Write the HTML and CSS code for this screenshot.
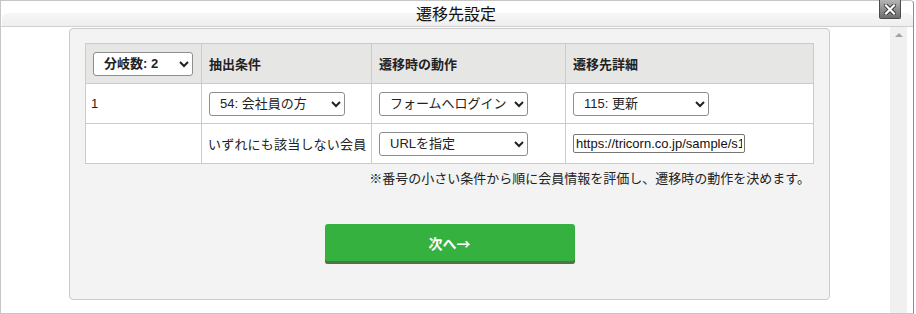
FILE: index.html
```html
<!DOCTYPE html>
<html lang="ja">
<head>
  <meta charset="UTF-8" />
  <title>遷移先設定</title>
  <link rel="stylesheet" href="styles.css">
</head>
<body>
  <div class="dialog">
    <div class="titlebar">
      <span class="title">遷移先設定</span>
      <button class="close-btn" type="button" aria-label="閉じる">
        <svg width="12" height="11" viewBox="0 0 12 11">
          <path d="M2 1.5 L10 9.5 M10 1.5 L2 9.5" stroke="#333" stroke-width="4" stroke-linecap="square" />
          <path d="M2 1.5 L10 9.5 M10 1.5 L2 9.5" stroke="#fff" stroke-width="2.2" stroke-linecap="square" />
        </svg>
      </button>
    </div>
    <div class="body-row">
      <div class="content">
        <div class="panel">
          <table class="rules">
            <tr class="head">
              <th class="col-num">
                <select class="sel sel-count">
                  <option>分岐数: 2</option>
                </select>
              </th>
              <th class="col-cond">抽出条件</th>
              <th class="col-action">遷移時の動作</th>
              <th class="col-detail">遷移先詳細</th>
            </tr>
            <tr>
              <td>1</td>
              <td>
                <select class="sel sel-cond">
                  <option>54: 会社員の方</option>
                </select>
              </td>
              <td>
                <select class="sel sel-action">
                  <option>フォームへログイン</option>
                </select>
              </td>
              <td>
                <select class="sel sel-detail">
                  <option>115: 更新</option>
                </select>
              </td>
            </tr>
            <tr>
              <td></td>
              <td class="nowrap">いずれにも該当しない会員</td>
              <td>
                <select class="sel sel-action">
                  <option>URLを指定</option>
                </select>
              </td>
              <td>
                <input class="url-input" type="text" value="https://tricorn.co.jp/sample/s1/index.html">
              </td>
            </tr>
          </table>
          <p class="note">※番号の小さい条件から順に会員情報を評価し、遷移時の動作を決めます。</p>
          <div class="actions">
            <button class="next-btn" type="button">次へ→</button>
          </div>
        </div>
      </div>
      <div class="scrollbar">
        <span class="arrow-up"></span>
      </div>
    </div>
  </div>
</body>
</html>
```

FILE: styles.css
```css
html, body {
  margin: 0;
  padding: 0;
  background: #fff;
}
body {
  width: 916px;
  height: 314px;
  overflow: hidden;
  font-family: "Liberation Sans", Arial, "Noto Sans CJK JP", sans-serif;
  font-size: 13px;
  color: #222;
}
.dialog {
  width: 912px;
  height: 312px;
  border: 1px solid #c6c6c6;
  border-right: 1px solid #8c8c8c;
  border-top-right-radius: 4px;
  display: flex;
  flex-direction: column;
  background: #fff;
}
.titlebar {
  position: relative;
  height: 25px;
  border-bottom: 1px solid #cfcfcf;
  display: flex;
  justify-content: center;
  align-items: flex-end;
}
.titlebar::before {
  content: "";
  position: absolute;
  left: 1px;
  right: 0;
  top: 12px;
  bottom: 0;
  background: linear-gradient(#f6f6f6, #efefef);
  border-radius: 6px 6px 0 0;
}
.title {
  position: relative;
  font-size: 16px;
  line-height: 22px;
  color: #111;
  padding-right: 2px;
}
.close-btn {
  position: absolute;
  top: -1px;
  right: 12px;
  width: 22px;
  height: 19px;
  padding: 0;
  border: 1px solid #4a4a4a;
  border-top: none;
  border-radius: 0 0 2px 2px;
  background: linear-gradient(#b4b4b4, #6e6e6e);
  display: flex;
  align-items: center;
  justify-content: center;
}
.body-row {
  flex: 1;
  display: flex;
  min-height: 0;
}
.content {
  flex: 1;
  padding: 1px 0 0 68px;
}
.scrollbar {
  width: 17px;
  margin-right: 6px;
  background: #f0f0f0;
  display: flex;
  justify-content: center;
  padding-top: 6px;
}
.arrow-up {
  width: 0;
  height: 0;
  border-left: 4px solid transparent;
  border-right: 4px solid transparent;
  border-bottom: 4px solid #a3a3a3;
}
.panel {
  width: 728px;
  background: #f3f3f3;
  border: 1px solid #cbcbcb;
  border-radius: 4px;
  padding: 14px 16px 35px 15px;
}
.rules {
  border-collapse: collapse;
  width: 729px;
  background: #fff;
}
.rules th,
.rules td {
  border: 1px solid #cbcbcb;
  height: 39px;
  padding: 0 7px;
  text-align: left;
  vertical-align: middle;
  font-size: 13px;
}
.rules td:first-child {
  padding-left: 5px;
}
.rules td.nowrap {
  white-space: nowrap;
  padding: 0 4px 0 6px;
  letter-spacing: 0.2px;
}
.rules .head th {
  background: #e6e6e4;
  font-weight: bold;
  color: #222;
}
.col-num { width: 101px; }
.col-cond { width: 155px; }
.col-action { width: 179px; }
.sel {
  height: 24px;
  font-family: inherit;
  font-size: 13px;
  color: #222;
  background: #fff;
  border: 1px solid #8e8e8e;
  border-radius: 3px;
  padding: 0 2px 0 6px;
}
.sel-count {
  width: 100px;
  font-weight: bold;
}
.sel-cond,
.sel-detail {
  width: 136px;
}
.sel-action {
  width: 149px;
}
.url-input {
  width: 166px;
  height: 17px;
  padding: 0 2px;
  border: 1px solid #767676;
  border-radius: 2px;
  font-family: inherit;
  font-size: 13px;
  color: #111;
}
.note {
  margin: 7px 0 0;
  padding-right: 3px;
  text-align: right;
  line-height: 16px;
  color: #222;
}
.actions {
  margin-top: 37px;
  display: flex;
  justify-content: center;
}
.next-btn {
  width: 250px;
  height: 40px;
  margin-left: 1px;
  border: none;
  border-radius: 3px;
  background: #35b13f;
  box-shadow: inset 0 -3px 0 #55714a;
  color: #fff;
  font-family: "Noto Sans CJK JP", sans-serif;
  font-size: 14px;
  font-weight: bold;
  padding-bottom: 4px;
}
```
